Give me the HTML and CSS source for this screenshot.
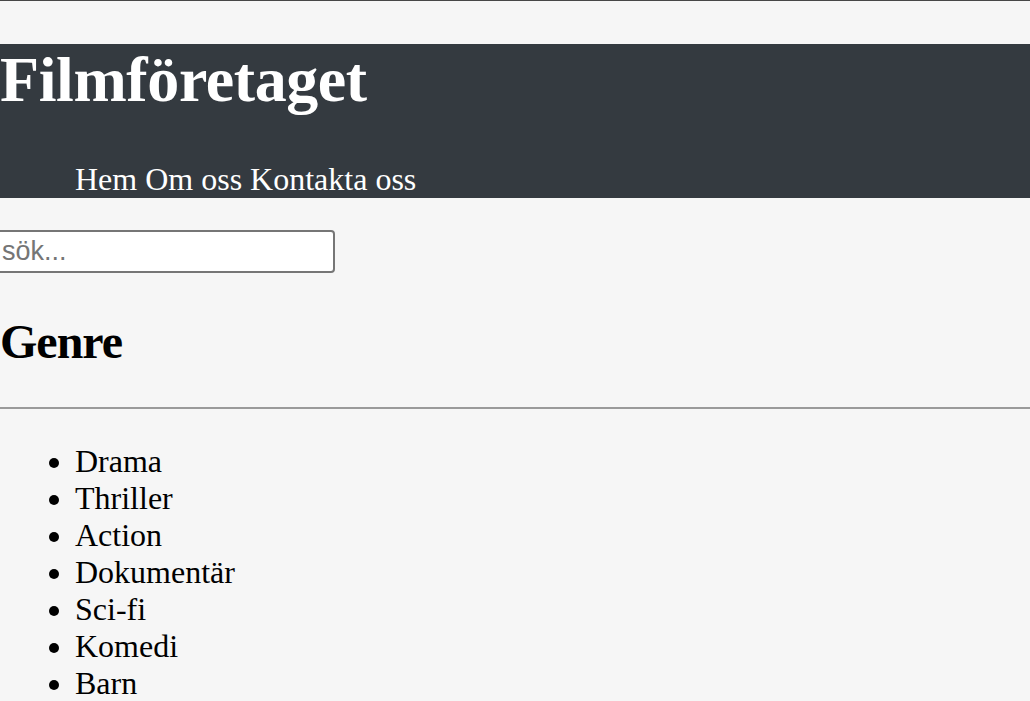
FILE: index.html
```html
<!DOCTYPE html>
<html lang="sv">
<head>
<meta charset="utf-8">
<title>Filmföretaget</title>
<link rel="stylesheet" href="styles.css">
</head>
<body>
<div class="topline"></div>
<header class="site-header">
  <h1 class="title">Filmföretaget</h1>
  <nav class="nav">Hem Om oss Kontakta oss</nav>
</header>
<main class="content">
  <input class="search" type="text" placeholder="sök...">
  <h2 class="genre-title">Genre</h2>
  <hr class="divider">
  <ul class="genres">
    <li>Drama</li>
    <li>Thriller</li>
    <li>Action</li>
    <li>Dokumentär</li>
    <li>Sci-fi</li>
    <li>Komedi</li>
    <li>Barn</li>
  </ul>
</main>
</body>
</html>
```
FILE: styles.css
```css
html, body {
  margin: 0;
  padding: 0;
  overflow: hidden;
}
body {
  background: #f6f6f6;
  font-family: "Liberation Serif", "Times New Roman", serif;
  font-size: 32px;
  color: #000;
}
.topline {
  height: 1px;
  background: #474747;
  margin-bottom: 43px;
}
.site-header {
  background: #343a40;
  color: #fff;
  padding-bottom: 1px;
}
.title {
  margin: 0;
  font-size: 64px;
  font-weight: bold;
  line-height: 71px;
  letter-spacing: -0.4px;
}
.nav {
  margin-top: 46px;
  padding-left: 75px;
  line-height: 36px;
}
.content {
  display: flex;
  flex-direction: column;
  align-items: flex-start;
}
.search {
  box-sizing: border-box;
  margin: 32px 0 0 -4px;
  width: 339px;
  height: 43px;
  border: 2px solid #767676;
  border-radius: 4px;
  background: #fff;
  padding: 0 4px;
  font-family: "Liberation Sans", Arial, sans-serif;
  font-size: 27px;
  color: #000;
}
.search::placeholder {
  color: #757575;
}
.genre-title {
  margin: 42px 0 0 0;
  font-size: 48px;
  font-weight: bold;
  line-height: 53px;
  letter-spacing: -1px;
}
.divider {
  align-self: stretch;
  margin: 39px 0 0 0;
  border: 0;
  height: 2px;
  background: #9a9a9a;
}
.genres {
  margin: 34px 0 0 0;
  padding-left: 75px;
  line-height: 37px;
}
```
